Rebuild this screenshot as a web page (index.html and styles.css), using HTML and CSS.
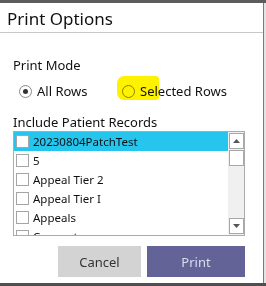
FILE: index.html
```html
<!DOCTYPE html>
<html>
<head>
<meta charset="utf-8">
<link rel="stylesheet" href="styles.css">
</head>
<body>
<div class="page">
  <div class="topstrip"></div>
  <div class="row-main">
    <div class="dialog">
      <div class="title">Print Options</div>
      <div class="content">
        <div class="label mode-label">Print Mode</div>
        <div class="radios">
          <label class="radio first"><span class="dot checked"></span><span>All Rows</span></label>
          <label class="radio sel"><span class="dot"></span><span class="rtext">Selected Rows</span><span class="hl"></span></label>
        </div>
        <div class="label rec-label">Include Patient Records</div>
        <div class="listbox">
          <div class="items">
            <div class="item active"><span class="cb"></span>20230804PatchTest</div>
            <div class="item"><span class="cb"></span>5</div>
            <div class="item"><span class="cb"></span>Appeal Tier 2</div>
            <div class="item"><span class="cb"></span>Appeal Tier I</div>
            <div class="item"><span class="cb"></span>Appeals</div>
            <div class="item"><span class="cb"></span>Concepts</div>
          </div>
          <div class="scrollbar">
            <div class="sbtn"><svg width="7" height="4" viewBox="0 0 7 4"><path d="M3.5 0 L7 4 L0 4 Z" fill="#555"/></svg></div>
            <div class="thumb"></div>
            <div class="track"></div>
            <div class="sbtn"><svg width="7" height="4" viewBox="0 0 7 4"><path d="M0 0 L7 0 L3.5 4 Z" fill="#555"/></svg></div>
          </div>
        </div>
        <div class="buttons">
          <button class="btn cancel">Cancel</button>
          <button class="btn print">Print</button>
        </div>
      </div>
    </div>
    <div class="side"></div>
  </div>
  <div class="bottomstrip"></div>
</div>
</body>
</html>
```
FILE: styles.css
```css
html, body { margin: 0; padding: 0; }
body {
  width: 266px;
  height: 286px;
  overflow: hidden;
  background: #4a4a4a;
  font-family: "Noto Sans", "Open Sans", sans-serif;
  color: #111;
}
.page { display: flex; flex-direction: column; height: 286px; }
.topstrip { height: 3px; background: #5c5c5c; }
.row-main { display: flex; height: 280px; }
.dialog {
  width: 263px;
  height: 280px;
  background: #fff;
  display: flex;
  flex-direction: column;
}
.side {
  width: 2px;
  border-left: 1px solid #7a7a7a;
  background: #e4e4e4;
}
.bottomstrip { height: 3px; background: #4f4f4f; }
.title {
  height: 26px;
  padding-top: 3px;
  border-bottom: 1px solid #c8c8c8;
  padding-left: 7px;
  font-size: 17px;
  line-height: 26px;
  color: #111;
}
.content { padding: 0 0 0 13px; display: flex; flex-direction: column; }
.label { font-size: 13px; line-height: 16px; color: #111; }
.mode-label { margin-top: 24px; }
.radios { display: flex; margin-top: 7px; height: 22px; font-size: 13px; }
.radio { display: flex; align-items: center; position: relative; height: 22px; }
.radio.first { margin-left: 6px; width: 103px; }
.dot {
  width: 11px; height: 11px;
  border: 1px solid #8a8a8a;
  border-radius: 50%;
  margin-right: 5px;
  position: relative;
  background: #fff;
  flex: none;
}
.dot.checked::after {
  content: "";
  position: absolute;
  left: 3px; top: 3px;
  width: 5px; height: 5px;
  border-radius: 50%;
  background: #333;
}
.sel .dot { border-color: #888; }
.hl {
  position: absolute;
  left: -5px; top: -4px;
  width: 42px; height: 24px;
  background: #fff200;
  border-radius: 7px 3px 3px 7px;
  mix-blend-mode: multiply;
}
.rec-label { margin-top: 12px; }
.listbox {
  margin-top: 1px;
  width: 230px;
  height: 103px;
  border: 1px solid #ababab;
  display: flex;
  overflow: hidden;
}
.items { flex: 1; }
.item {
  height: 19px;
  display: flex;
  align-items: center;
  font-size: 11.5px;
  color: #111;
}
.item.active { background: #25c5ee; }
.cb {
  width: 11px; height: 11px;
  border: 1px solid #a5a5a5;
  background: #fff;
  margin: 0 4px 0 2px;
  flex: none;
}
.scrollbar {
  width: 16px;
  background: #f0f0f0;
  display: flex;
  flex-direction: column;
  padding: 1px 0;
}
.sbtn, .thumb {
  height: 14px;
  border: 1px solid #a8a8a8;
  background: #fff;
  display: flex;
  align-items: center;
  justify-content: center;
  margin: 0 0 0 1px;
  width: 13px;
}
.thumb { margin-top: 1px; }
.track { flex: 1; }
.buttons { display: flex; margin-top: 10px; padding-left: 45px; gap: 6px; }
.btn {
  border: none;
  height: 31px;
  font-family: inherit;
  font-size: 13px;
  padding: 0;
}
.cancel { width: 83px; background: #d3d3d3; color: #333; }
.print { width: 98px; background: #636397; color: #dcdcec; }
```
